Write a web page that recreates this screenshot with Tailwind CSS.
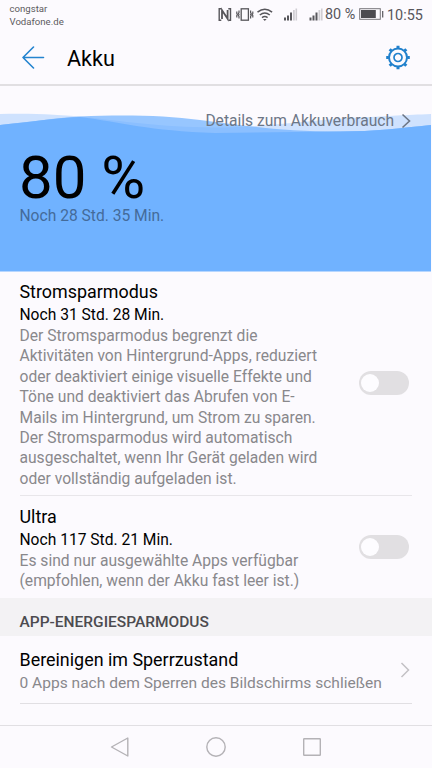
<!DOCTYPE html>
<html lang="de">
<head>
<meta charset="utf-8">
<title>Akku</title>
<script src="https://cdn.jsdelivr.net/npm/@tailwindcss/browser@4"></script>
</head>
<body class="bg-[#fcfafe]">
<div class="w-[432px] h-[768px] overflow-hidden flex flex-col bg-[#fcfafe] font-[Roboto,sans-serif] text-black">

  <!-- Status bar -->
  <div class="h-[30px] shrink-0 flex justify-between pl-[9.500px] pr-[8px]">
    <div class="text-[9.600px] leading-[13px] text-[#5c5b60] pt-[2px] whitespace-nowrap">congstar<br>Vodafone.de</div>
    <div class="flex h-[29px] text-[14.400px] text-[#57565b] whitespace-nowrap">
      <svg class="w-[107px] h-[29px] shrink-0" viewBox="216 0 107 29" fill="none">
        <path d="M220.300 8.800H218.200V20.200H220.300M227.300 8.800H229.500V20.200H227.300" stroke="#57565b" stroke-width="1.400"/>
        <path d="M221 19V10.200L226.600 18.800V10" stroke="#57565b" stroke-width="1.800"/>
        <rect x="240.200" y="8.800" width="7.200" height="11.400" stroke="#57565b" stroke-width="1.300"/>
        <path d="M238 10.500v2l-.6 1 .6 1-.6 1 .6 1v2M249.600 10.500v2l.6 1-.6 1 .6 1-.6 1v2M235.800 11.500v2l.6 1-.6 1v2M251.800 11.500v2l-.6 1 .6 1v2" stroke="#57565b" stroke-width="1.200"/>
        <path d="M256.500 12.200Q263.800 6.200 271.100 12.200M258.800 15Q263.800 10.900 268.800 15M261 17.600Q263.800 15.400 266.600 17.600" stroke="#57565b" stroke-width="1.500"/>
        <path d="M262 18.900h3.600l-1.800 2z" fill="#57565b"/>
        <path d="M283 17.500h2v3h-2zM286 15.500h2v5h-2zM289 12.500h2v8h-2z" fill="#57565b"/>
        <path d="M292 10h1.800v10.500H292zM294.500 8.500h1.600v12h-1.600z" fill="#d0ced3"/>
        <path d="M308.500 17.500h2v3h-2zM311.500 15.500h2v5h-2zM314.500 12.500h2v8h-2z" fill="#57565b"/>
        <path d="M317.500 10h1.800v10.500h-1.800zM320 8.500h1.600v12H320z" fill="#d0ced3"/>
      </svg>
      <span class="leading-[29px] w-[34px] pl-[1px]">80 %</span>
      <svg class="w-[29px] h-[29px] shrink-0" viewBox="357 0 29 29" fill="none">
        <rect x="358.700" y="8.700" width="20.600" height="10.600" stroke="#77767a" stroke-width="1"/>
        <path d="M360 10h14.800v8H360z" fill="#4c4b50"/>
        <path d="M381.700 11v6.500" stroke="#57565b" stroke-width="1.200"/>
      </svg>
      <span class="leading-[31px] w-[37px]">10:55</span>
    </div>
  </div>

  <!-- Title bar -->
  <div class="h-[56px] shrink-0 flex items-center pl-[22px] pr-[20px] border-b-2 border-[#e1dfe2]">
    <svg class="w-[23px] h-[24px]" viewBox="0 0 23 24" fill="none" stroke="#2484cf" stroke-width="1.600" stroke-linecap="round" stroke-linejoin="round"><path d="M21.500 12.500H1M11.500 2L1 12.500 11.500 23"/></svg>
    <h1 class="text-[21.600px] leading-[28px] pl-[22px] pt-[3px] grow">Akku</h1>
    <svg class="w-[28px] h-[28px]" viewBox="-14 -14.500 28 28" fill="none" stroke="#2080cc">
      <circle r="9" stroke-width="2"/>
      <circle r="4" stroke-width="1.700"/>
      <path stroke-width="3" d="M0-9.200V-11.800M0 9.200V11.800M-9.200 0H-11.800M9.200 0H11.800M6.500-6.500L8.300-8.300M6.500 6.500L8.300 8.300M-6.500 6.500L-8.300 8.300M-6.500-6.500L-8.300-8.300"/>
    </svg>
  </div>

  <!-- Battery level -->
  <div class="relative h-[185px] shrink-0">
    <svg class="absolute inset-0 w-[432px] h-[186px]" viewBox="0 86 432 186">
      <path d="M0 114C30 113 60 114.500 85 117C120 121 160 127 215 127.500C270 127 320 119 360 117.500C390 116 405 115 431 114V140H0Z" fill="#70b2ff" opacity=".32"/>
      <path d="M0 125C30 122 55 118 80 116.500C125 114.500 165 115.500 200 120C240 125 280 131.500 340 131.500C375 131.500 400 128 431 125V140H0Z" fill="#70b2ff" opacity=".72"/>
      <path d="M0 125C30 122 55 118 80 117C120 122 150 131 215 133L340 131.500C375 131.500 400 128 431 125V271.500H0Z" fill="#70b2ff"/>
    </svg>
    <div class="relative flex flex-col h-full">
      <div class="flex justify-end items-center pr-[21px] pt-[25px] text-[15.600px] leading-[21px] text-[#6c7686]">
        <span>Details zum Akkuverbrauch</span>
        <svg class="w-[10px] h-[16px] ml-[7px] mb-[2px]" viewBox="0 0 10 16" fill="none" stroke="#6c7686" stroke-width="1.600"><path d="M1.500 1.500L8.500 8 1.500 14.500"/></svg>
      </div>
      <div class="pl-[19px] pt-[18px] text-[60px] leading-[56px] whitespace-nowrap">80 %</div>
      <div class="pl-[19.500px] text-[15.600px] leading-[21px] text-[#446b9a]">Noch 28 Std. 35 Min.</div>
    </div>
  </div>

  <!-- Power saving mode -->
  <div class="h-[225px] shrink-0 ml-[19.500px] mr-[20px] border-b border-[#e8e6ea] flex items-center justify-between pr-[3px]">
    <div class="self-start pt-[9px] whitespace-nowrap">
      <div class="text-[17.900px] leading-[24px]">Stromsparmodus</div>
      <div class="pt-[1px] text-[15.600px] leading-[21px]">Noch 31 Std. 28 Min.</div>
      <div class="text-[15.640px] leading-[20.400px] text-[#89888c]">Der Stromsparmodus begrenzt die<br>Aktivitäten von Hintergrund-Apps, reduziert<br>oder deaktiviert einige visuelle Effekte und<br>Töne und deaktiviert das Abrufen von E-<br>Mails im Hintergrund, um Strom zu sparen.<br>Der Stromsparmodus wird automatisch<br>ausgeschaltet, wenn Ihr Gerät geladen wird<br>oder vollständig aufgeladen ist.</div>
    </div>
    <div class="w-[50px] h-[24px] rounded-full bg-[#e1dfe2] p-[2px] flex items-center"><div class="size-[18px] rounded-full bg-[#fdfcff]"></div></div>
  </div>

  <!-- Ultra mode -->
  <div class="h-[102px] shrink-0 ml-[19.500px] mr-[20px] flex items-center justify-between pr-[3px]">
    <div class="self-start pt-[9px] whitespace-nowrap">
      <div class="text-[17.900px] leading-[24px]">Ultra</div>
      <div class="pt-[1px] text-[15.600px] leading-[21px]">Noch 117 Std. 21 Min.</div>
      <div class="text-[15.640px] leading-[20.400px] text-[#89888c]">Es sind nur ausgewählte Apps verfügbar<br>(empfohlen, wenn der Akku fast leer ist.)</div>
    </div>
    <div class="w-[50px] h-[24px] rounded-full bg-[#e1dfe2] p-[2px] flex items-center"><div class="size-[18px] rounded-full bg-[#fdfcff]"></div></div>
  </div>

  <div class="h-[38px] shrink-0 bg-[#f3f2f4] pl-[19.500px] pt-[14px] text-[15.500px] leading-[21px] font-medium text-[#4c4b4f]">APP-ENERGIESPARMODUS</div>

  <div class="h-[68px] shrink-0 ml-[19.500px] mr-[20px] border-b border-[#e1dfe3] flex items-center justify-between">
    <div class="self-start pt-[12px] whitespace-nowrap">
      <div class="text-[17.900px] leading-[24px]">Bereinigen im Sperrzustand</div>
      <div class="pt-[1px] text-[15.550px] leading-[21px] text-[#89888c]">0 Apps nach dem Sperren des Bildschirms schließen</div>
    </div>
    <svg class="w-[10px] h-[16px] mr-[2px]" viewBox="0 0 10 16" fill="none" stroke="#c3c1c5" stroke-width="1.500"><path d="M1.500 1L8.500 8 1.500 15"/></svg>
  </div>

  <!-- Navigation bar -->
  <div class="mt-[21px] h-[43px] shrink-0 border-t border-[#e1dfe3] flex items-center justify-center gap-[76px]">
    <svg class="size-[20px]" viewBox="0 0 20 20" fill="none" stroke="#b4b2b6" stroke-width="1.400" stroke-linejoin="round"><path d="M17.800 1V19L1.500 10z"/></svg>
    <svg class="size-[20px]" viewBox="0 0 20 20" fill="none" stroke="#b4b2b6" stroke-width="1.400"><circle cx="10" cy="10" r="9.200"/></svg>
    <svg class="size-[20px]" viewBox="0 0 20 20" fill="none" stroke="#b4b2b6" stroke-width="1.400"><rect x="1.700" y="1.700" width="16.600" height="16.600" rx=".5"/></svg>
  </div>
</div>
</body>
</html>
